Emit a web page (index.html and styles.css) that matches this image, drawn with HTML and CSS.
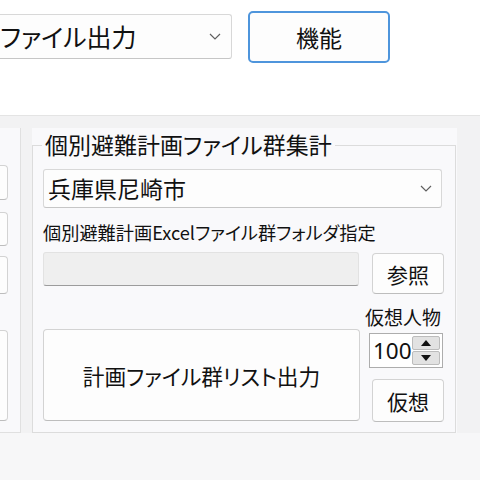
FILE: index.html
```
<!DOCTYPE html>
<html lang="ja">
<head>
<meta charset="utf-8">
<link rel="stylesheet" href="styles.css">
</head>
<body>
<div class="top">
  <div class="combo top-combo">
    <span class="combo-text">ファイル出力</span>
    <svg class="chev" width="12" height="7" viewBox="0 0 12 7"><polyline points="1,1 6,6 11,1" fill="none" stroke="#606060" stroke-width="1.2"/></svg>
  </div>
  <button class="btn btn-main">機能</button>
</div>
<div class="main">
  <div class="side">
    <div class="side-box b1"></div>
    <div class="side-box b2"></div>
    <div class="side-box b3"></div>
    <div class="side-box b4"></div>
  </div>
  <div class="group">
    <div class="group-title">個別避難計画ファイル群集計</div>
    <div class="frame">
      <div class="combo pref">
        <span class="combo-text">兵庫県尼崎市</span>
        <svg class="chev" width="12" height="7" viewBox="0 0 12 7"><polyline points="1,1 6,6 11,1" fill="none" stroke="#606060" stroke-width="1.2"/></svg>
      </div>
      <div class="label">個別避難計画Excelファイル群フォルダ指定</div>
      <div class="folder-row">
        <div class="textbox"></div>
        <button class="btn btn-small btn-ref">参照</button>
      </div>
      <div class="action-row">
        <button class="btn btn-big">計画ファイル群リスト出力</button>
        <div class="virt">
          <div class="virt-label">仮想人物</div>
          <div class="spinner">
            <span class="spin-value">100</span>
            <div class="spin-btns">
              <span class="spin-btn"><svg width="10" height="6" viewBox="0 0 10 6"><polygon points="0,6 10,6 5,0" fill="#111"/></svg></span>
              <span class="spin-btn"><svg width="10" height="6" viewBox="0 0 10 6"><polygon points="0,0 10,0 5,6" fill="#111"/></svg></span>
            </div>
          </div>
          <button class="btn btn-small btn-virt">仮想</button>
        </div>
      </div>
    </div>
  </div>
</div>
<div class="footer"></div>
</body>
</html>
```
FILE: styles.css
```
html, body {
  margin: 0;
  padding: 0;
}
body {
  width: 480px;
  height: 480px;
  overflow: hidden;
  font-family: "Noto Sans CJK JP", "Noto Sans", sans-serif;
  font-feature-settings: "palt";
  color: #111111;
  background: #f7f7f8;
}
.top {
  height: 115px;
  background: #ffffff;
  border-bottom: 1px solid #e4e4e4;
  display: flex;
  align-items: flex-start;
}
.combo {
  box-sizing: border-box;
  display: flex;
  align-items: center;
  justify-content: space-between;
  background: #fdfdfd;
  border: 1px solid #d8d8d8;
  border-bottom-color: #c6c6c6;
  border-radius: 3px;
  white-space: nowrap;
}
.top-combo {
  margin: 14px 0 0 -20px;
  width: 252px;
  height: 45px;
  padding: 0 10px 0 19px;
  font-size: 25px;
  line-height: 45px;
}
.chev {
  flex: none;
}
.btn {
  box-sizing: border-box;
  font-family: inherit;
  font-feature-settings: "palt";
  color: #111111;
  background: #fdfdfd;
  border: 1px solid #d3d3d3;
  border-bottom-color: #bdbdbd;
  border-radius: 4px;
  padding: 0;
  white-space: nowrap;
}
.btn-main {
  margin: 11px 0 0 16px;
  width: 142px;
  height: 52px;
  border: 2px solid #4e95dc;
  border-radius: 5px;
  font-size: 23px;
}
.main {
  display: flex;
  height: 317px;
  box-sizing: border-box;
  padding-top: 12px;
  background: #f2f2f3;
}
.side {
  box-sizing: border-box;
  width: 21px;
  height: 305px;
  background: #f9f9fb;
  border-right: 1px solid #e0e0e0;
  border-bottom: 1px solid #e0e0e0;
  overflow: hidden;
}
.side-box {
  box-sizing: border-box;
  margin-left: -40px;
  width: 48px;
  background: #fdfdfd;
  border: 1px solid #d3d3d3;
  border-bottom-color: #bdbdbd;
  border-radius: 4px;
}
.b1 { margin-top: 37px; height: 35px; }
.b2 { margin-top: 12px; height: 34px; }
.b3 { margin-top: 10px; height: 38px; }
.b4 { margin-top: 36px; height: 91px; }
.group {
  position: relative;
  margin-left: 11px;
  width: 425px;
  height: 305px;
  background: #f9f9fb;
}
.group-title {
  position: absolute;
  top: 0;
  left: 10px;
  padding: 0 3px;
  background: #f9f9fb;
  font-size: 23px;
  line-height: 32px;
  white-space: nowrap;
}
.frame {
  box-sizing: border-box;
  margin-top: 17px;
  width: 424px;
  height: 288px;
  border: 1px solid #dcdcdc;
  padding-left: 10px;
}
.pref {
  margin-top: 23px;
  width: 399px;
  height: 39px;
  padding: 0 9px 0 4px;
  font-size: 23px;
  line-height: 37px;
}
.label {
  margin-top: 12px;
  height: 24px;
  font-size: 18.2px;
  line-height: 24px;
  white-space: nowrap;
}
.folder-row {
  margin-top: 8px;
  height: 42px;
  display: flex;
  align-items: flex-start;
}
.textbox {
  box-sizing: border-box;
  width: 316px;
  height: 34px;
  background: #efefef;
  border: 1px solid #e2e2e2;
  border-bottom-color: #9c9c9c;
  border-radius: 3px;
}
.btn-small {
  width: 72px;
  font-size: 21px;
}
.btn-ref {
  margin: 1px 0 0 13px;
  height: 41px;
}
.action-row {
  display: flex;
  align-items: flex-start;
}
.btn-big {
  margin-top: 35px;
  width: 317px;
  height: 92px;
  font-size: 21.7px;
}
.virt {
  margin-left: 5px;
  width: 80px;
  display: flex;
  flex-direction: column;
  align-items: flex-start;
}
.virt-label {
  margin-top: 12px;
  height: 22px;
  font-size: 19px;
  line-height: 22px;
  white-space: nowrap;
}
.spinner {
  box-sizing: border-box;
  margin: 5px 0 0 4px;
  width: 74px;
  height: 35px;
  background: #ffffff;
  border: 1px solid #adadad;
  display: flex;
  align-items: center;
  padding: 2px;
}
.spin-value {
  font-family: "Noto Sans", sans-serif;
  font-size: 22.5px;
  line-height: 31px;
  padding-left: 1px;
}
.spin-btns {
  margin-left: auto;
  width: 28px;
  height: 29px;
  display: flex;
  flex-direction: column;
  gap: 1px;
}
.spin-btn {
  box-sizing: border-box;
  flex: 1;
  display: flex;
  align-items: center;
  justify-content: center;
  background: #e2e2e2;
  border: 1px solid #bcbcbc;
  border-radius: 2px;
}
.btn-virt {
  margin: 11px 0 0 7px;
  height: 43px;
}
.footer {
  height: 47px;
  background: #f7f7f8;
}
```
